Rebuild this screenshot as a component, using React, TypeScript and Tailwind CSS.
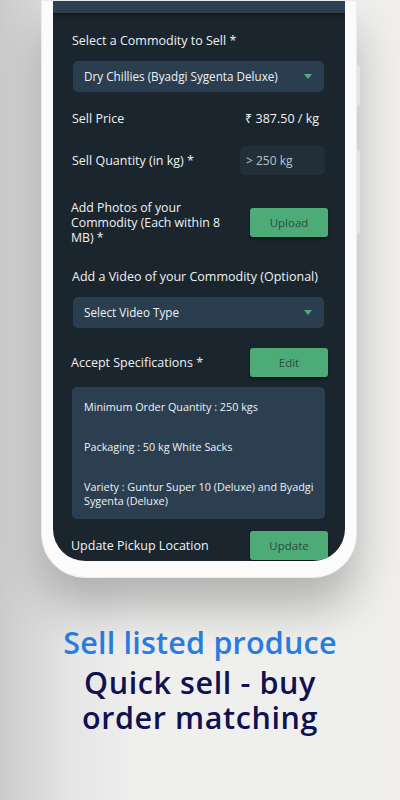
// Small green dropdown caret
function Caret() {
  return (
    <svg width="8" height="5" viewBox="0 0 8 5" className="shrink-0">
      <path d="M0 0h8L4 5z" fill="#4fae79" />
    </svg>
  )
}

function Select({ label }: { label: string }) {
  return (
    <div className="mx-[1px] h-[31px] rounded-[5px] bg-[#2a3e4f] flex items-center justify-between pl-[11px] pr-[12px] text-[11.7px] text-[#eef2f4]">
      <span>{label}</span>
      <Caret />
    </div>
  )
}

function GreenButton({ label }: { label: string }) {
  return (
    <button className="w-[78px] h-[29px] rounded-[3px] bg-[#4dab77] text-[11.5px] text-[#2c4c42] shadow-[0_2px_3px_rgba(0,0,0,0.45)] shrink-0 -mr-[3px]">
      {label}
    </button>
  )
}

const specs = [
  'Minimum Order Quantity : 250 kgs',
  'Packaging : 50 kg White Sacks',
  'Variety : Guntur Super 10 (Deluxe) and Byadgi Sygenta (Deluxe)',
]

export default function App() {
  return (
    <div className="relative w-[400px] h-[800px] overflow-hidden bg-[linear-gradient(90deg,#cbcbcb_0%,#e6e6e6_18%,#efefee_35%,#f0efed_100%)]">
      {/* Phone */}
      <div className="relative ml-[41px] w-[316px] rounded-b-[44px] bg-[#fbfbfb] border border-[#ececec] px-[11px] pb-[16px] shadow-[0_30px_45px_rgba(0,0,0,0.25)]">
        {/* side buttons */}
        <div className="absolute -right-[4px] top-[64px] w-[3px] h-[41px] rounded-r-sm bg-[#e4e4e4]" />
        <div className="absolute -right-[4px] top-[149px] w-[3px] h-[84px] rounded-r-sm bg-[#e4e4e4]" />

        <div className="h-[560px] overflow-hidden rounded-b-[32px] bg-[#1b252d] font-['Open_Sans',sans-serif] text-[#eef2f4]">
          <div className="h-[12px] bg-[#2c4051] shadow-[0_2px_3px_rgba(0,0,0,0.4)]" />

          <div className="pl-[19px] pr-[20px] flex flex-col">
            <div className="mt-[19px] text-[12.5px] leading-[18px]">Select a Commodity to Sell *</div>
            <div className="mt-[11px]">
              <Select label="Dry Chillies (Byadgi Sygenta Deluxe)" />
            </div>

            <div className="mt-[18px] flex justify-between text-[12.5px] leading-[18px]">
              <span>Sell Price</span>
              <span className="mr-[6px]">₹ 387.50 / kg</span>
            </div>

            <div className="mt-[18px] flex items-center justify-between">
              <span className="text-[12.5px] leading-[18px]">Sell Quantity (in kg) *</span>
              <div className="w-[85px] h-[29px] rounded-[5px] bg-[#222f39] flex items-center pl-[6px] text-[12px] text-[#b9c2c8]">
                &gt; 250 kg
              </div>
            </div>

            <div className="mt-[25px] flex items-center justify-between -ml-[1px]">
              <span className="w-[160px] text-[12.3px] leading-[15px]">
                Add Photos of your Commodity (Each within 8 MB) *
              </span>
              <GreenButton label="Upload" />
            </div>

            <div className="mt-[23px] text-[12.5px] leading-[18px] whitespace-nowrap">Add a Video of your Commodity (Optional)</div>
            <div className="mt-[11px]">
              <Select label="Select Video Type" />
            </div>

            <div className="mt-[20px] flex items-center justify-between -ml-[1px]">
              <span className="text-[12.5px] leading-[18px]">Accept Specifications *</span>
              <GreenButton label="Edit" />
            </div>

            <div className="mt-[10px] rounded-[5px] bg-[#2b3f50] pl-[12px] pr-[10px] pt-[13px] pb-[11px] flex flex-col gap-[26px] text-[10.8px] leading-[14px]">
              {specs.map((s) => (
                <div key={s}>{s}</div>
              ))}
            </div>

            <div className="mt-[12px] flex items-center justify-between -ml-[1px]">
              <span className="text-[12.5px] leading-[18px]">Update Pickup Location</span>
              <GreenButton label="Update" />
            </div>
          </div>
        </div>
      </div>

      {/* Caption */}
      <div className="mt-[49px] flex flex-col items-center text-center font-['Open_Sans',sans-serif] font-semibold text-[30.5px] leading-none tracking-[0.2px]">
        <div className="text-[#2a7de1]">Sell listed produce</div>
        <div className="text-[#0f1150] mt-[9px] tracking-[0.6px]">Quick sell - buy</div>
        <div className="text-[#0f1150] mt-[5px] tracking-[0.6px]">order matching</div>
      </div>
    </div>
  )
}
